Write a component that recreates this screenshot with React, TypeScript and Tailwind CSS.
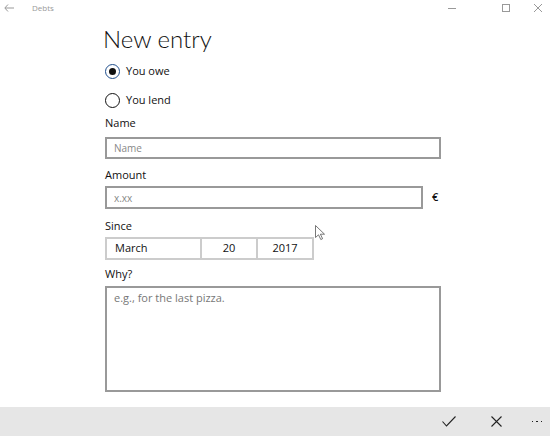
import { useState } from "react";

function Radio({ checked, label, onClick }: { checked: boolean; label: string; onClick: () => void }) {
  return (
    <button type="button" onClick={onClick} className="flex h-[29px] items-center gap-[6px] text-left">
      <span
        className={
          checked
            ? "grid h-[15px] w-[15px] place-items-center rounded-full border-[1.5px] border-[#1f4e8c]"
            : "grid h-[15px] w-[15px] place-items-center rounded-full border-[1.5px] border-[#111]"
        }
      >
        {checked ? <span className="h-[7px] w-[7px] rounded-full bg-[#111]" /> : null}
      </span>
      <span className="text-[11px] text-[#111]">{label}</span>
    </button>
  );
}

function Label({ children }: { children: string }) {
  return <div className="mb-[3px] h-[16px] text-[11px] leading-[16px] text-[#111]">{children}</div>;
}

export default function App() {
  const [owe, setOwe] = useState(true);

  return (
    <div
      className="relative flex h-[436px] w-[550px] flex-col bg-white"
      style={{ fontFamily: '"Open Sans", "Noto Sans", sans-serif' }}
    >
      {/* title bar */}
      <div className="flex h-[16px] items-center text-[#999]">
        <svg width="10" height="8" viewBox="0 0 10 8" className="ml-[4px]" fill="none" stroke="#999" strokeWidth="1">
          <path d="M10 4H1M4 0.5L0.8 4L4 7.5" />
        </svg>
        <span className="ml-[18px] text-[8px]">Debts</span>
        <div className="ml-auto flex items-center">
          <span className="h-px w-[8px] bg-[#999]" />
          <span className="ml-[46px] h-[8px] w-[8px] border border-[#999]" />
          <svg width="8" height="8" viewBox="0 0 8 8" className="ml-[24px] mr-[8px]" stroke="#999" strokeWidth="1">
            <path d="M0 0L8 8M8 0L0 8" />
          </svg>
        </div>
      </div>

      <div className="ml-[105px] w-[336px]">
        <h1
          className="-ml-[2px] mt-[6px] text-[24px] font-light leading-[34px] text-[#111]"
          style={{ fontFamily: 'Lato, "Open Sans", sans-serif' }}
        >
          New entry
        </h1>

        <div className="mt-[1px] flex flex-col">
          <Radio checked={owe} label="You owe" onClick={() => setOwe(true)} />
          <Radio checked={!owe} label="You lend" onClick={() => setOwe(false)} />
        </div>

        <div>
          <Label>Name</Label>
          <input
            placeholder="Name"
            className="h-[22px] w-[336px] border-2 border-[#999] px-[7px] text-[10px] text-[#111] outline-none placeholder:text-[#888]"
          />
        </div>

        <div className="mt-[8px]">
          <Label>Amount</Label>
          <div className="flex items-center">
            <input
              placeholder="x.xx"
              className="h-[23px] w-[318px] border-2 border-[#999] px-[7px] text-[10px] text-[#111] outline-none placeholder:text-[#888]"
            />
            <span className="ml-[9px] text-[11px] font-semibold text-[#111]">€</span>
          </div>
        </div>

        <div className="mt-[9px]">
          <Label>Since</Label>
          <div className="flex h-[23px] w-[209px] border-2 border-[#ccc] text-[11px] text-[#111]">
            <div className="flex w-[93px] items-center pl-[8px]">March</div>
            <div className="flex w-[56px] items-center justify-center border-l-2 border-[#ccc]">20</div>
            <div className="flex flex-1 items-center justify-center border-l-2 border-[#ccc]">2017</div>
          </div>
        </div>

        <div className="mt-[6px]">
          <div className="mb-[4px] h-[16px] text-[11px] leading-[16px] text-[#111]">Why?</div>
          <textarea
            placeholder="e.g., for the last pizza."
            className="block h-[106px] w-[336px] resize-none border-2 border-[#999] px-[7px] py-[2px] text-[11px] text-[#111] outline-none placeholder:text-[#777]"
          />
        </div>
      </div>

      {/* command bar */}
      <div className="mt-auto flex h-[29px] items-center justify-end bg-[#e6e6e6] text-[#222]">
        <svg width="14" height="11" viewBox="0 0 14 11" fill="none" stroke="#222" strokeWidth="1.1">
          <path d="M0.5 5.5L4.5 10L13.5 0.5" />
        </svg>
        <svg width="11" height="11" viewBox="0 0 11 11" className="ml-[35px]" stroke="#222" strokeWidth="1.1">
          <path d="M0.5 0.5L10.5 10.5M10.5 0.5L0.5 10.5" />
        </svg>
        <span className="ml-[30px] mr-[8px] flex gap-[3px]">
          <span className="h-[1.5px] w-[1.5px] bg-[#222]" />
          <span className="h-[1.5px] w-[1.5px] bg-[#222]" />
          <span className="h-[1.5px] w-[1.5px] bg-[#222]" />
        </span>
      </div>

      {/* mouse pointer */}
      <svg
        width="12"
        height="16"
        viewBox="0 0 12 16"
        className="pointer-events-none absolute left-[315px] top-[225px]"
        fill="white"
        stroke="#555"
        strokeWidth="0.8"
      >
        <path d="M0.5 0.5V12.5L3.5 9.8L5.8 14.5L7.6 13.7L5.4 9.2H9.5Z" />
      </svg>
    </div>
  );
}
